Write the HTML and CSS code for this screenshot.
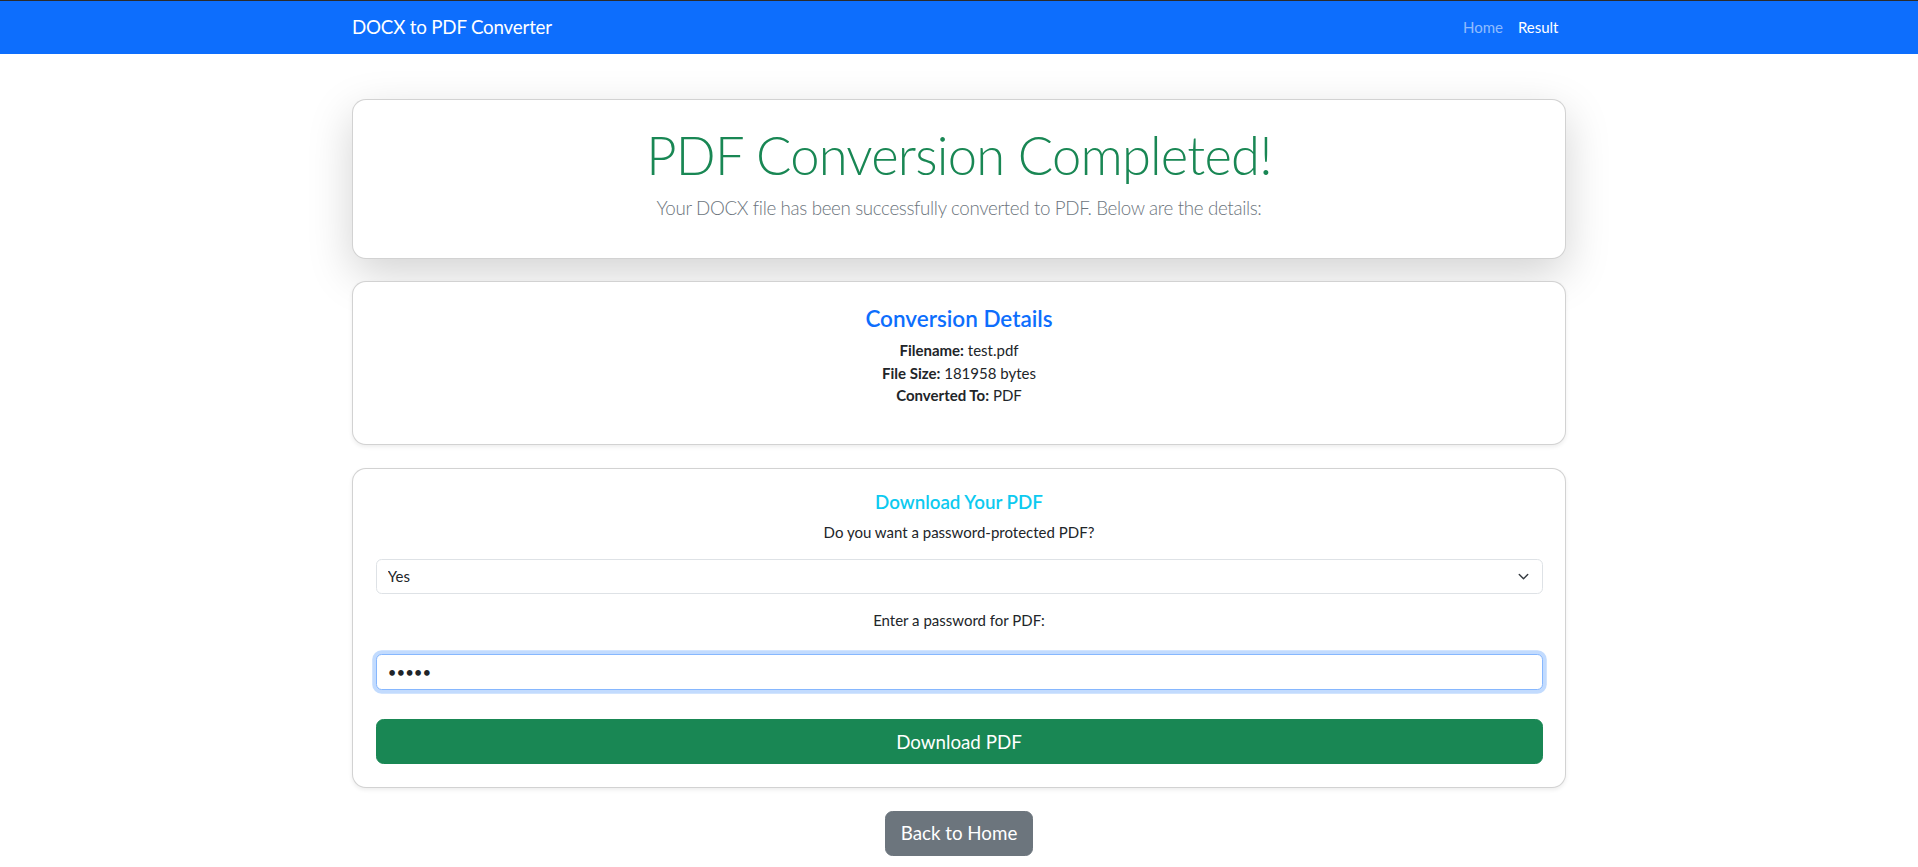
FILE: index.html
```html
<!DOCTYPE html>
<html lang="en">
<head>
<meta charset="utf-8">
<title>DOCX to PDF Converter - Result</title>
<link rel="stylesheet" href="styles.css">
</head>
<body>
<nav class="navbar">
  <div class="container nav-inner">
    <a class="brand" href="#">DOCX to PDF Converter</a>
    <ul class="nav-links">
      <li><a class="nav-link" href="#">Home</a></li>
      <li><a class="nav-link active" href="#">Result</a></li>
    </ul>
  </div>
</nav>

<main class="container main">
  <div class="stack">
    <section class="card card-hero">
      <h1 class="hero-title">PDF Conversion Completed!</h1>
      <p class="lead">Your DOCX file has been successfully converted to PDF. Below are the details:</p>
    </section>

    <section class="card card-details">
      <h4 class="details-title">Conversion Details</h4>
      <div class="detail-list">
        <p><strong>Filename:</strong> test.pdf</p>
        <p><strong>File Size:</strong> 181958 bytes</p>
        <p><strong>Converted To:</strong> PDF</p>
      </div>
    </section>

    <section class="card card-download">
      <h5 class="dl-title">Download Your PDF</h5>
      <p class="question">Do you want a password-protected PDF?</p>
      <div class="select-wrap">
        <select class="form-select">
          <option>Yes</option>
          <option>No</option>
        </select>
        <svg class="chev" viewBox="0 0 16 16" aria-hidden="true"><path d="m2 5 6 6 6-6" fill="none" stroke="#343a40" stroke-width="2" stroke-linecap="round" stroke-linejoin="round"/></svg>
      </div>
      <p class="question pw-label">Enter a password for PDF:</p>
      <input class="form-control is-focused" type="password" value="12345">
      <button class="btn btn-success btn-block" type="button">Download PDF</button>
    </section>
  </div>

  <div class="back-wrap">
    <a class="btn btn-secondary" href="#">Back to Home</a>
  </div>
</main>
</body>
</html>
```

FILE: styles.css
```css
html, body {
  margin: 0;
  padding: 0;
}

body {
  font-family: Lato, "Liberation Sans", sans-serif;
  font-size: 15px;
  line-height: 1.5;
  color: #212529;
  background: #fff;
}

.container {
  width: 1214px;
  margin: 0 auto;
}

/* Navbar */
.navbar {
  background: #0d6efd;
  border-top: 1px solid #2b2b2b;
  padding: 7.5px 0;
}

.nav-inner {
  display: flex;
  align-items: center;
  justify-content: space-between;
}

.brand {
  font-size: 18.75px;
  line-height: 28.125px;
  padding: 4.7px 0;
  color: #fff;
  text-decoration: none;
  letter-spacing: -0.2px;
}

.nav-links {
  display: flex;
  list-style: none;
  margin: 0;
  padding: 0;
}

.nav-link {
  display: block;
  padding: 7.5px 7.5px;
  font-size: 15px;
  line-height: 22.5px;
  color: rgba(255, 255, 255, 0.55);
  text-decoration: none;
}

.nav-link.active {
  color: #fff;
}

/* Main */
.main {
  margin-top: 45px;
}

.stack {
  display: flex;
  flex-direction: column;
  gap: 22.5px;
}

.card {
  background: #fff;
  border: 1px solid rgba(0, 0, 0, 0.175);
  border-radius: 14px;
  padding: 22.5px;
  text-align: center;
  box-shadow: 0 2px 4px rgba(0, 0, 0, 0.075);
}

.card-hero {
  box-shadow: 0 15px 45px rgba(0, 0, 0, 0.175);
}

.hero-title {
  font-size: 52.5px;
  font-weight: 300;
  line-height: 1.2;
  color: #198754;
  margin: 1px 0 7.5px;
  letter-spacing: -0.8px;
}

.lead {
  font-size: 18.75px;
  font-weight: 300;
  line-height: 1.5;
  color: #6c757d;
  margin: 0 0 13.5px;
  letter-spacing: -0.35px;
}

.details-title {
  font-size: 22.5px;
  font-weight: 600;
  line-height: 1.2;
  color: #0d6efd;
  margin: 0 0 7.5px;
}

.detail-list {
  margin: 0 0 15px;
}

.detail-list p {
  margin: 0;
}

.detail-list strong {
  font-weight: 700;
}

.dl-title {
  font-size: 18.75px;
  font-weight: 600;
  line-height: 1.2;
  color: #0dcaf0;
  margin: 0 0 7.5px;
}

.question {
  margin: 0 0 15px;
}

.pw-label {
  margin-bottom: 22.5px;
}

.select-wrap {
  position: relative;
  margin-bottom: 15px;
}

.form-select,
.form-control {
  display: block;
  width: 100%;
  box-sizing: border-box;
  height: 35.75px;
  padding: 5.625px 11.25px;
  font-family: inherit;
  font-size: 15px;
  line-height: 22.5px;
  color: #212529;
  background: #fff;
  border: 1px solid #dee2e6;
  border-radius: 5.625px;
  -webkit-appearance: none;
  appearance: none;
  text-align: left;
  margin: 0;
}

.form-select {
  padding-right: 42px;
}

.chev {
  position: absolute;
  right: 11.25px;
  top: 50%;
  margin-top: -5.625px;
  width: 15px;
  height: 11.25px;
  pointer-events: none;
}

.form-control.is-focused {
  border-color: #86b7fe;
  box-shadow: 0 0 0 3.75px rgba(13, 110, 253, 0.25);
  outline: 0;
}

.btn {
  display: inline-block;
  box-sizing: border-box;
  font-family: inherit;
  font-size: 18.75px;
  line-height: 28.125px;
  padding: 7.5px 15px;
  border-radius: 7.5px;
  border: 1px solid transparent;
  color: #fff;
  text-align: center;
  text-decoration: none;
  cursor: pointer;
}

.btn-block {
  display: block;
  width: 100%;
  margin-top: 29px;
}

.btn-success {
  background: #198754;
  border-color: #198754;
}

.btn-secondary {
  background: #6c757d;
  border-color: #6c757d;
}

.back-wrap {
  display: flex;
  justify-content: center;
  margin-top: 23px;
}
```
